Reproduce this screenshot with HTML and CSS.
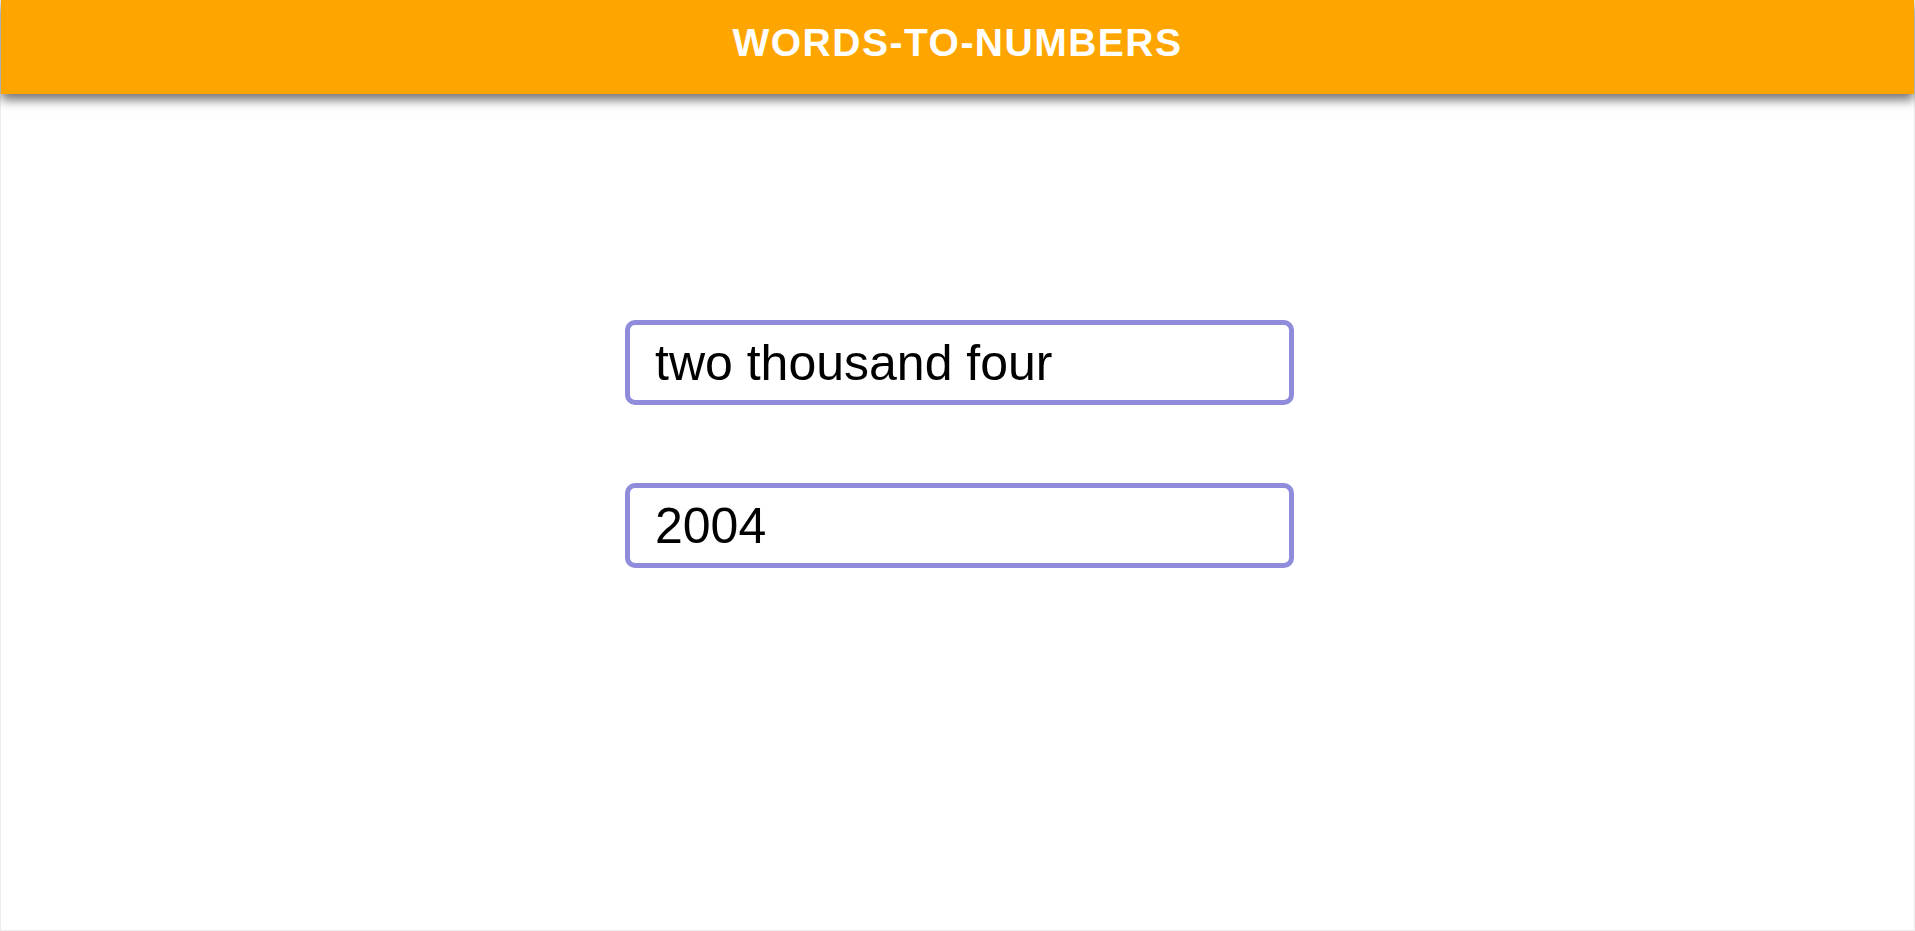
FILE: index.html
```html
<!DOCTYPE html>
<html lang="en">
<head>
<meta charset="utf-8">
<title>Words-to-Numbers</title>
<link rel="stylesheet" href="styles.css">
</head>
<body>
<div class="app">
  <header class="topbar">
    <h1 class="title">WORDS-TO-NUMBERS</h1>
  </header>
  <main class="content">
    <input class="field" type="text" value="two thousand four">
    <input class="field" type="text" value="2004">
  </main>
</div>
</body>
</html>
```

FILE: styles.css
```css
html, body {
  margin: 0;
  padding: 0;
  height: 100%;
  background: #ffffff;
}

.app {
  box-sizing: border-box;
  height: 100%;
  border: 1px solid #ececec;
  border-top: none;
  font-family: "Liberation Sans", Arial, sans-serif;
}

.topbar {
  height: 94px;
  box-sizing: border-box;
  padding-bottom: 8px;
  background: #ffa500;
  display: flex;
  align-items: center;
  justify-content: center;
  box-shadow: 0 6px 10px rgba(0, 0, 0, 0.55);
  position: relative;
}

.title {
  margin: 0;
  color: #ffffff;
  font-size: 39px;
  font-weight: bold;
  letter-spacing: 1.5px;
}

.content {
  display: flex;
  flex-direction: column;
  align-items: center;
  gap: 78px;
  padding-top: 226px;
  padding-left: 4px;
}

.field {
  box-sizing: border-box;
  width: 669px;
  height: 85px;
  border: 5px solid #8e8cdb;
  border-radius: 10px;
  padding: 0 25px;
  font-family: "Liberation Sans", Arial, sans-serif;
  font-size: 50px;
  color: #000000;
  background: #ffffff;
  outline: none;
}
```
